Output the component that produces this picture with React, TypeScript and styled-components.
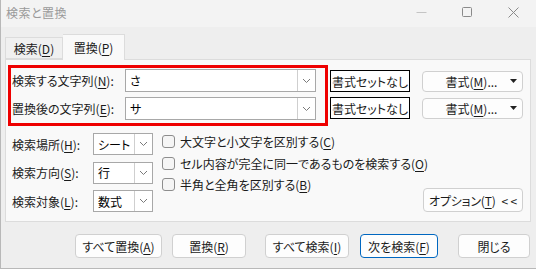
import React from 'react';
import styled, { createGlobalStyle } from 'styled-components';

const GlobalStyle = createGlobalStyle`
    html, body {
        margin: 0;
        padding: 0;
    }
    body {
        font-family: "Noto Sans CJK JP", "Noto Sans", sans-serif;
        font-size: 12px;
        font-feature-settings: "palt";
        color: #1a1a1a;
        background: #eeeeee;
    }
    u {
        text-underline-offset: 2px;
    }
`;

const Window = styled.div`
    width: 536px;
    height: 269px;
    box-sizing: border-box;
    background: #eeeeee;
    border-left: 1px solid #b8b8b8;
    border-bottom: 1px solid #b8b8b8;
    display: flex;
    flex-direction: column;
`;

const TitleBar = styled.div`
    height: 27px;
    flex-shrink: 0;
    background: #f3f3f3;
    display: flex;
    align-items: center;
    padding-left: 5px;
`;

const Title = styled.span`
    color: #9a9a9a;
    font-size: 12px;
    line-height: 1;
    margin-top: -1px;
    letter-spacing: 0.5px;
`;

const Controls = styled.div`
    margin-left: auto;
    display: flex;
    align-items: center;
    height: 100%;
`;

const ControlBtn = styled.div<{ $w: number }>`
    width: ${p => p.$w}px;
    display: flex;
    justify-content: center;
    margin-top: -3px;
`;

const TabRow = styled.div`
    display: flex;
    align-items: flex-end;
    height: 25px;
    margin-top: 7px;
    padding-left: 4px;
    position: relative;
    z-index: 1;
`;

const Tab = styled.div<{ $active?: boolean; $w: number }>`
    width: ${p => p.$w}px;
    height: ${p => (p.$active ? 26 : 22)}px;
    box-sizing: border-box;
    border: 1px solid #dcdcdc;
    border-bottom: ${p => (p.$active ? 'none' : '1px solid #dcdcdc')};
    border-left: ${p => (p.$active ? 'none' : '1px solid #dcdcdc')};
    background: ${p => (p.$active ? '#f9f9f9' : '#f0f0f0')};
    margin-bottom: ${p => (p.$active ? -1 : 0)}px;
    display: flex;
    align-items: center;
    justify-content: center;
    font-size: 12px;
    color: #1a1a1a;
    padding-top: ${p => (p.$active ? 0 : 1)}px;
`;

const Panel = styled.div`
    margin-left: 4px;
    width: 526px;
    height: 163px;
    box-sizing: border-box;
    background: #f9f9f9;
    border: 1px solid #dcdcdc;
    display: flex;
    flex-direction: column;
`;

const TopSection = styled.div`
    display: flex;
    align-items: flex-start;
    margin-top: 5px;
    margin-left: 2px;
`;

const RedBox = styled.div`
    width: 320px;
    height: 61px;
    box-sizing: border-box;
    border: 3px solid #ee0000;
    padding: 1px 8px 0 1px;
    display: flex;
    flex-direction: column;
    gap: 5px;
`;

const FieldRow = styled.div`
    display: flex;
    align-items: center;
    height: 23px;
`;

const FieldLabel = styled.span<{ $w: number }>`
    width: ${p => p.$w}px;
    flex-shrink: 0;
    white-space: nowrap;
`;

const Combo = styled.div<{ $w: number; $h: number }>`
    width: ${p => p.$w}px;
    height: ${p => p.$h}px;
    box-sizing: border-box;
    border: 1px solid #a8a8a8;
    background: #ffffff;
    display: flex;
    align-items: stretch;
`;

const ComboText = styled.span`
    flex: 1;
    display: flex;
    align-items: center;
    padding-left: 4px;
    color: #000;
    white-space: nowrap;
    overflow: hidden;
`;

const ComboArrow = styled.span`
    width: 17px;
    flex-shrink: 0;
    border-left: 1px solid #cfcfcf;
    display: flex;
    align-items: center;
    justify-content: center;
`;

const FormatCol = styled.div`
    display: flex;
    flex-direction: column;
    gap: 5px;
    margin-left: 2px;
    padding-top: 5px;
`;

const FormatRow = styled.div`
    display: flex;
    align-items: center;
    height: 22px;
    gap: 12px;
`;

const NoFormatBtn = styled.div`
    width: 80px;
    height: 22px;
    box-sizing: border-box;
    border: 1px solid #000;
    background: #ffffff;
    display: flex;
    align-items: center;
    justify-content: center;
    white-space: nowrap;
`;

const FormatBtn = styled.div`
    width: 101px;
    height: 21px;
    box-sizing: border-box;
    border: 1px solid #d0d0d0;
    border-radius: 4px;
    background: #fdfdfd;
    display: flex;
    align-items: center;
    padding: 0 5px 0 10px;
`;

const FormatText = styled.span`
    flex: 1;
    text-align: center;
    white-space: nowrap;
`;

const LowerSection = styled.div`
    display: flex;
    align-items: flex-start;
    margin-top: 7px;
    padding-left: 6px;
`;

const OptCol = styled.div`
    display: flex;
    flex-direction: column;
    gap: 6.5px;
`;

const OptRow = styled.div`
    display: flex;
    align-items: center;
    height: 22px;
`;

const CheckCol = styled.div`
    width: 250px;
    flex-shrink: 0;
    display: flex;
    flex-direction: column;
    margin-left: 9px;
    margin-top: -2px;
`;

const CheckRow = styled.label`
    display: flex;
    align-items: center;
    height: 21.5px;
    white-space: nowrap;
`;

const CheckBox = styled.span`
    width: 13px;
    height: 13px;
    flex-shrink: 0;
    box-sizing: border-box;
    border: 1px solid #8d8d8d;
    border-radius: 3px;
    background: #f5f5f5;
    margin-right: 5px;
`;

const OptionsBtn = styled.div`
    margin-left: auto;
    margin-right: 7px;
    margin-top: 55px;
    width: 100px;
    height: 24px;
    flex-shrink: 0;
    box-sizing: border-box;
    border: 1px solid #d0d0d0;
    border-radius: 4px;
    background: #fdfdfd;
    display: flex;
    align-items: center;
    justify-content: center;
    white-space: nowrap;
    gap: 6px;
    letter-spacing: -0.2px;
`;

const ButtonRow = styled.div`
    display: flex;
    align-items: center;
    margin-top: 12px;
    padding-left: 74px;
`;

const DialogBtn = styled.div<{ $w: number; $ml: number; $primary?: boolean }>`
    width: ${p => p.$w}px;
    height: 24px;
    margin-left: ${p => p.$ml}px;
    box-sizing: border-box;
    border: 1px solid ${p => (p.$primary ? '#0067c0' : '#d0d0d0')};
    border-radius: 4px;
    background: #fdfdfd;
    display: flex;
    align-items: center;
    justify-content: center;
    white-space: nowrap;
`;

const Chevron = () => (
    <svg width="9" height="6" viewBox="0 0 9 6">
        <polyline points="1,1 4.5,4.5 8,1" fill="none" stroke="#7a7a7a" strokeWidth="1" />
    </svg>
);

const DropTriangle = () => (
    <svg width="7" height="4" viewBox="0 0 7 4">
        <polygon points="0,0 7,0 3.5,4" fill="#222" />
    </svg>
);

const ComboBox: React.FC<{ value: string; w: number; h: number }> = ({ value, w, h }) => (
    <Combo $w={w} $h={h}>
        <ComboText>{value}</ComboText>
        <ComboArrow>
            <Chevron />
        </ComboArrow>
    </Combo>
);

const options = [
    { label: <>検索場所(<u>H</u>):</>, value: 'シート' },
    { label: <>検索方向(<u>S</u>):</>, value: '行' },
    { label: <>検索対象(<u>L</u>):</>, value: '数式' },
];

const checks = [
    <>大文字と小文字を区別する(<u>C</u>)</>,
    <>セル内容が完全に同一であるものを検索する(<u>O</u>)</>,
    <>半角と全角を区別する(<u>B</u>)</>,
];

const buttons = [
    { label: <>すべて置換(<u>A</u>)</>, w: 87, ml: 0 },
    { label: <>置換(<u>R</u>)</>, w: 74, ml: 10 },
    { label: <>すべて検索(<u>I</u>)</>, w: 84, ml: 19 },
    { label: <>次を検索(<u>F</u>)</>, w: 78, ml: 11, primary: true },
    { label: <>閉じる</>, w: 72, ml: 20 },
];

export default function App() {
    return (
        <>
            <GlobalStyle />
            <Window>
                <TitleBar>
                    <Title>検索と置換</Title>
                    <Controls>
                        <ControlBtn $w={46}>
                            <svg width="11" height="11" viewBox="0 0 11 11">
                                <line x1="0.5" y1="5.5" x2="10.5" y2="5.5" stroke="#c4c4c4" strokeWidth="1" />
                            </svg>
                        </ControlBtn>
                        <ControlBtn $w={46}>
                            <svg width="11" height="11" viewBox="0 0 11 11">
                                <rect x="0.5" y="0.5" width="9" height="9" rx="1" fill="none" stroke="#8a8a8a" strokeWidth="1" />
                            </svg>
                        </ControlBtn>
                        <ControlBtn $w={46}>
                            <svg width="11" height="11" viewBox="0 0 11 11">
                                <path d="M0.5 0.5 L10.5 10.5 M10.5 0.5 L0.5 10.5" stroke="#8a8a8a" strokeWidth="1" />
                            </svg>
                        </ControlBtn>
                    </Controls>
                </TitleBar>

                <TabRow>
                    <Tab $w={58}>検索(<u>D</u>)</Tab>
                    <Tab $w={62} $active>置換(<u>P</u>)</Tab>
                </TabRow>

                <Panel>
                    <TopSection>
                        <RedBox>
                            <FieldRow>
                                <FieldLabel $w={113}>検索する文字列(<u>N</u>):</FieldLabel>
                                <ComboBox value="さ" w={191} h={23} />
                            </FieldRow>
                            <FieldRow>
                                <FieldLabel $w={113}>置換後の文字列(<u>E</u>):</FieldLabel>
                                <ComboBox value="サ" w={191} h={23} />
                            </FieldRow>
                        </RedBox>
                        <FormatCol>
                            {[0, 1].map(i => (
                                <FormatRow key={i}>
                                    <NoFormatBtn>書式セットなし</NoFormatBtn>
                                    <FormatBtn>
                                        <FormatText>書式(<u>M</u>)...</FormatText>
                                        <DropTriangle />
                                    </FormatBtn>
                                </FormatRow>
                            ))}
                        </FormatCol>
                    </TopSection>

                    <LowerSection>
                        <OptCol>
                            {options.map((o, i) => (
                                <OptRow key={i}>
                                    <FieldLabel $w={81}>{o.label}</FieldLabel>
                                    <ComboBox value={o.value} w={60} h={22} />
                                </OptRow>
                            ))}
                        </OptCol>
                        <CheckCol>
                            {checks.map((c, i) => (
                                <CheckRow key={i}>
                                    <CheckBox />
                                    {c}
                                </CheckRow>
                            ))}
                        </CheckCol>
                        <OptionsBtn>
                            <span>オプション(<u>T</u>)</span>
                            <span>&lt; &lt;</span>
                        </OptionsBtn>
                    </LowerSection>
                </Panel>

                <ButtonRow>
                    {buttons.map((b, i) => (
                        <DialogBtn key={i} $w={b.w} $ml={b.ml} $primary={b.primary}>
                            {b.label}
                        </DialogBtn>
                    ))}
                </ButtonRow>
            </Window>
        </>
    );
}
